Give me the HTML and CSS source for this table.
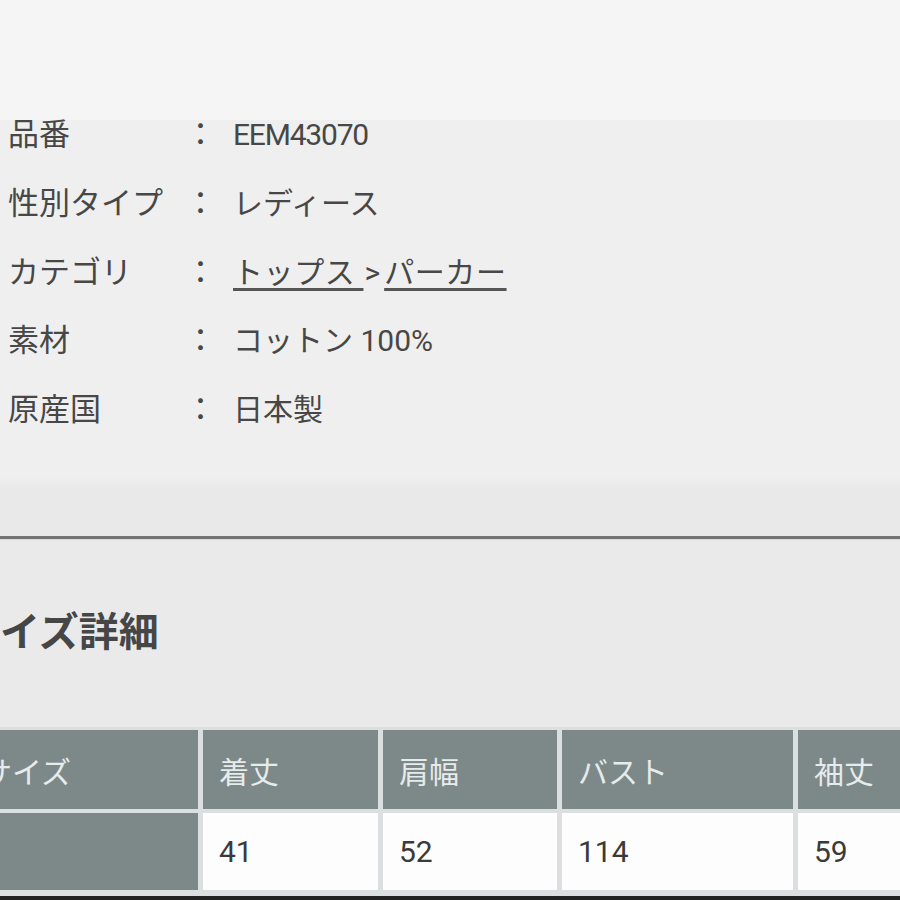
FILE: index.html
```html
<!DOCTYPE html>
<html lang="ja">
<head>
<meta charset="utf-8">
<title>商品詳細</title>
<link rel="stylesheet" href="styles.css">
</head>
<body>
<div class="topband"></div>
<section class="info">
  <dl class="spec">
    <dt>品番</dt><dd class="colon">：</dd><dd class="val"><span class="code">EEM43070</span></dd>
    <dt>性別タイプ</dt><dd class="colon">：</dd><dd class="val">レディース</dd>
    <dt>カテゴリ</dt><dd class="colon">：</dd><dd class="val"><a href="#" class="link">トップス&nbsp;</a><span class="sep">&gt;</span><a href="#" class="link">パーカー</a></dd>
    <dt>素材</dt><dd class="colon">：</dd><dd class="val">コットン 100%</dd>
    <dt>原産国</dt><dd class="colon">：</dd><dd class="val">日本製</dd>
  </dl>
</section>
<div class="divider"></div>
<section class="size">
  <h2 class="size-title">サイズ詳細</h2>
  <div class="size-table">
    <div class="cell head">サイズ</div>
    <div class="cell head">着丈</div>
    <div class="cell head">肩幅</div>
    <div class="cell head">バスト</div>
    <div class="cell head">袖丈</div>
    <div class="cell head"></div>
    <div class="cell">41</div>
    <div class="cell">52</div>
    <div class="cell">114</div>
    <div class="cell">59</div>
  </div>
</section>
<div class="edge"></div>
</body>
</html>
```
FILE: styles.css
```css
html, body {
  margin: 0;
  padding: 0;
}
body {
  width: 900px;
  height: 900px;
  overflow: hidden;
  background: #eaeaea;
  font-family: Roboto, "Noto Sans CJK JP", sans-serif;
  color: #474747;
}
.topband {
  height: 120px;
  background: #f5f5f5;
}
.info {
  height: 416px;
  box-sizing: border-box;
  padding-left: 8px;
  background: linear-gradient(#efefef 0, #efefef 355px, #e9e9e9 370px, #e9e9e9 416px);
}
.spec {
  margin: 0;
  display: grid;
  grid-template-columns: 177px 48px auto;
  row-gap: 38.75px;
  line-height: 30px;
  font-size: 31px;
}
.spec dt, .spec dd {
  margin: 0;
  white-space: nowrap;
}
.spec .val {
  font-size: 30px;
}
.code {
  letter-spacing: -1.2px;
}
.sep {
  display: inline-block;
  margin: 0 4px 0 1px;
}
.link {
  color: #474747;
  text-decoration: underline;
  text-decoration-thickness: 3px;
  text-underline-offset: 5px;
  text-decoration-color: #555;
  letter-spacing: 0.6px;
}
.divider {
  height: 3px;
  background: #747474;
  box-shadow: 0 1px 1px rgba(0,0,0,0.08);
}
.size {
  padding-top: 73px;
}
.size-title {
  margin: 0 0 73px -40px;
  font-size: 40px;
  line-height: 42px;
  font-weight: 700;
  color: #464646;
  white-space: nowrap;
}
.size-table {
  display: grid;
  grid-template-columns: 232px 175px 174px 231px 231px;
  grid-template-rows: 79px 77px;
  column-gap: 5px;
  row-gap: 4px;
  margin-left: -39px;
  width: max-content;
  padding: 3px 5px 6px 5px;
  background: #dcdfdf;
}
.cell {
  display: flex;
  align-items: center;
  padding-left: 16px;
  font-size: 30px;
  background: #fdfdfd;
  color: #3a3a3a;
  white-space: nowrap;
}
.cell.head {
  background: #7d8889;
  color: #e6ebeb;
}
.edge {
  height: 6px;
  background: #222;
}
```
